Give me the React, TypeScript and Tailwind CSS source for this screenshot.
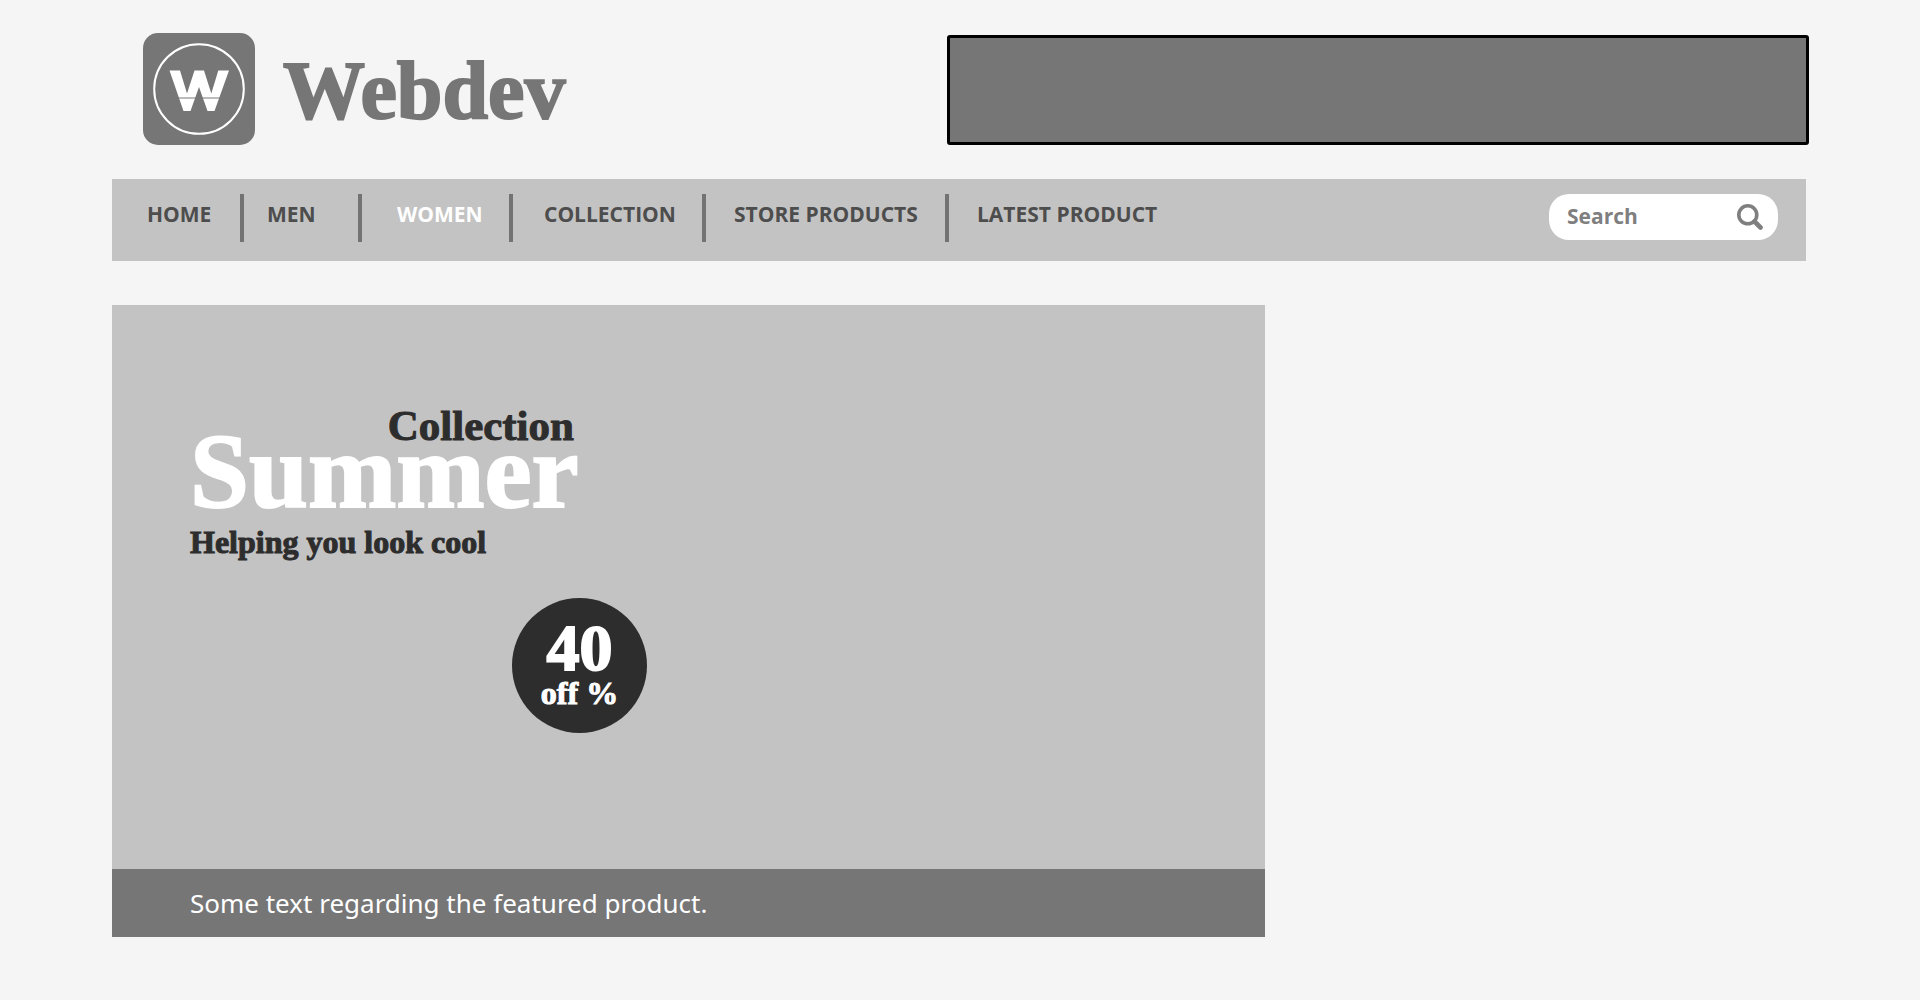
const navItems = [
  { label: "HOME", box: "w-[132px] pl-[35px]", tone: "text-[#4d4d4d]", divider: true },
  { label: "MEN", box: "w-[118px] pl-[23px]", tone: "text-[#4d4d4d]", divider: true },
  { label: "WOMEN", box: "w-[151px] pl-[35px]", tone: "text-white", divider: true },
  { label: "COLLECTION", box: "w-[193px] pl-[31px]", tone: "text-[#4d4d4d]", divider: true },
  { label: "STORE PRODUCTS", box: "w-[243px] pl-[28px]", tone: "text-[#4d4d4d]", divider: true },
  { label: "LATEST PRODUCT", box: "pl-[28px]", tone: "text-[#4d4d4d]", divider: false },
];

function Logo() {
  return (
    <svg viewBox="0 0 112 112" className="size-28 shrink-0" aria-hidden="true">
      <rect width="112" height="112" rx="15" fill="#767676" />
      <circle cx="56" cy="56" r="44.8" fill="none" stroke="#fff" strokeWidth="2" />
      <path
        d="M26.5 37.5H37L44 60.5L51.5 37.5H61L68.3 60.5L75.3 37.5H86L71.5 78H64.5L56 54L47.5 78H40.5Z"
        fill="#fff"
      />
      <path d="M34 65H78" stroke="#767676" strokeWidth="1" />
    </svg>
  );
}

function Header() {
  return (
    <header className="grid grid-cols-[804fr_862fr] pt-8 pr-[111px] pl-[143px]">
      <a href="#" className="flex items-center gap-7">
        <Logo />
        <span className="pt-1 font-['Liberation_Serif',serif] text-[82px] leading-[96px] font-bold text-[#767676] [-webkit-text-stroke:2px_#767676]">
          Webdev
        </span>
      </a>
      <div className="mt-[3px] h-[110px] rounded-[3px] border-3 border-black bg-[#767676]" />
    </header>
  );
}

function NavBar() {
  return (
    <nav className="mt-[34px] mr-[114px] ml-28 flex h-[82px] items-start justify-between bg-[#c3c3c3] pt-[15px] pr-7">
      <ul className="flex">
        {navItems.map((item) => (
          <li
            key={item.label}
            className={`h-12 ${item.box} ${item.divider ? "border-r-4 border-[#737373]" : ""}`}
          >
            <a href="#" className={`block text-[21px] leading-10 font-bold whitespace-nowrap ${item.tone}`}>
              {item.label}
            </a>
          </li>
        ))}
      </ul>
      <form className="flex h-[46px] w-[229px] items-center rounded-[20px] bg-white pr-[15px] pl-[18px]">
        <input
          type="text"
          aria-label="Search"
          placeholder="Search"
          className="min-w-0 flex-1 text-[21px] font-bold text-[#7f7f7f] outline-none placeholder:text-[#7f7f7f] placeholder:opacity-100"
        />
        <button type="button" aria-label="Submit search">
          <svg viewBox="0 0 26 26" className="size-[26px]" fill="none" stroke="#7f7f7f">
            <circle cx="10.8" cy="10.8" r="9" strokeWidth="3.6" />
            <path d="M17.5 17.5L23.5 23.5" strokeWidth="4.6" strokeLinecap="round" />
          </svg>
        </button>
      </form>
    </nav>
  );
}

function Hero() {
  return (
    <main className="mt-11 mr-[114px] ml-28 grid grid-cols-[1153fr_541fr]">
      <section className="bg-[#c3c3c3]">
        <div className="h-[564px] pt-[97px] pl-[78px] font-['Liberation_Serif',serif] font-bold">
          <h1 className="w-[388px]">
            <span className="block pr-1 text-right text-[43px] leading-12 text-[#2d2d2d] [-webkit-text-stroke:1px_#2d2d2d]">
              Collection
            </span>
            <span className="-mt-7 block text-[106px] leading-[100px] text-white [-webkit-text-stroke:2px_#fff]">
              Summer
            </span>
          </h1>
          <p className="text-[32px] leading-10 text-[#2d2d2d] [-webkit-text-stroke:1px_#2d2d2d]">
            Helping you look cool
          </p>
          <div className="mt-9 ml-[322px] flex size-[135px] flex-col items-center justify-center rounded-full bg-[#2d2d2d] text-white">
            <span className="text-[66px] leading-[54px] [-webkit-text-stroke:2px_#fff]">40</span>
            <span className="text-[32px] leading-9 [-webkit-text-stroke:1px_#fff]">off %</span>
          </div>
        </div>
        <p className="bg-[#767676] pl-[78px] font-['Noto_Sans',sans-serif] text-[26px] leading-[68px] text-white">
          Some text regarding the featured product.
        </p>
      </section>
    </main>
  );
}

export default function App() {
  return (
    <div className="min-h-screen bg-[#f5f5f5] pb-16 font-['Open_Sans',sans-serif]">
      <Header />
      <NavBar />
      <Hero />
    </div>
  );
}
